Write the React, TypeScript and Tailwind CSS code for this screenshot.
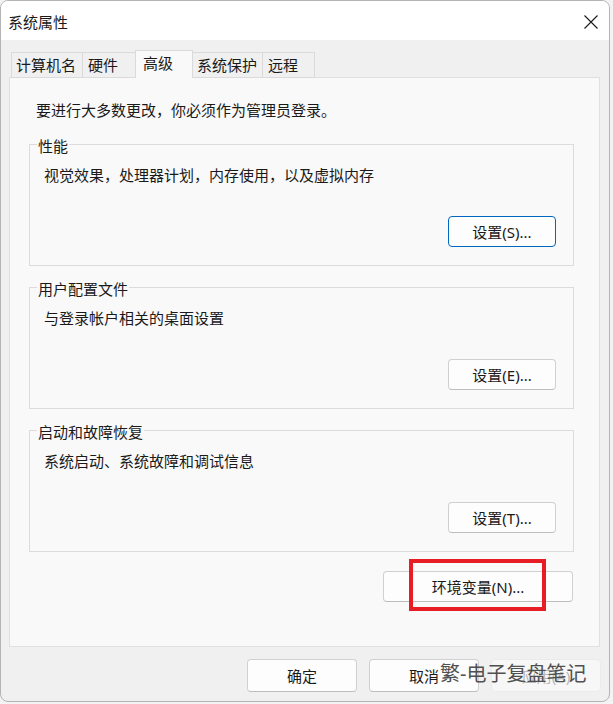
import React from "react";

const font = "font-['Noto_Sans','Noto_Sans_CJK_SC',sans-serif]";

function Btn({ label, primary }: { label: string; primary?: boolean }) {
  return (
    <div
      className={`ml-auto mr-[17px] mt-[31px] flex h-[31px] w-[108px] items-center justify-center rounded-[4px] border bg-[#fdfdfd] text-[15px] leading-[20px] text-[#1a1a1a] ${
        primary ? "border-[#0067c0]" : "border-[#d0d0d0] border-b-[#bdbdbd]"
      }`}
    >
      {label}
    </div>
  );
}

function Group({ title, desc, btn, primary, mt }: { title: string; desc: string; btn: string; primary?: boolean; mt: string }) {
  return (
    <div className={`ml-[19px] flex h-[122px] w-[545px] flex-col border border-[#dcdcdc] ${mt}`}>
      <div className="-mt-[9px] ml-[7px] w-fit bg-[#f9f9f9] px-[1px] text-[15px] leading-[20px] text-[#1a1a1a]">{title}</div>
      <div className="mt-[9px] pl-[14px] text-[15px] leading-[20px] text-[#1a1a1a]">{desc}</div>
      <Btn label={btn} primary={primary} />
    </div>
  );
}

export default function App() {
  return (
    <div className={`h-[704px] w-[613px] bg-[#f3f3f3] ${font}`}>
      <div className="flex h-[702px] w-[610px] flex-col overflow-hidden rounded-[8px] border border-[#b4b4b4] bg-[#f0f0f0]">
        {/* title bar */}
        <div className="flex h-[39px] items-center justify-between bg-white pt-[2px]">
          <div className="pl-[7px] text-[15px] leading-[20px] text-[#1a1a1a]">系统属性</div>
          <svg width="14" height="14" viewBox="0 0 14 14" className="mr-[11px]">
            <path d="M0.5 0.5 L13.5 13.5 M13.5 0.5 L0.5 13.5" stroke="#1a1a1a" strokeWidth="1.1" fill="none" />
          </svg>
        </div>

        {/* tabs */}
        <div className="relative z-10 -mb-px flex h-[38px] items-end pl-[10px] pt-[10px] text-[15px] leading-[20px] text-[#1a1a1a]">
          <div className="h-[26px] w-[72px] border border-[#dadada] bg-[#f0f0f0] pl-[4px] pt-[2px]">计算机名</div>
          <div className="-ml-px h-[26px] w-[55px] border border-[#dadada] bg-[#f0f0f0] pl-[5px] pt-[2px]">硬件</div>
          <div className="relative z-10 -ml-[2px] h-[28px] w-[58px] border border-b-0 border-[#dadada] bg-[#f9f9f9] pl-[7px] pt-[2px]">高级</div>
          <div className="-ml-[2px] h-[26px] w-[72px] border border-[#dadada] bg-[#f0f0f0] pl-[5px] pt-[2px]">系统保护</div>
          <div className="-ml-px h-[26px] w-[53px] border border-[#dadada] bg-[#f0f0f0] pl-[5px] pt-[2px]">远程</div>
        </div>

        {/* panel */}
        <div className="ml-[8px] flex h-[570px] w-[591px] flex-col border border-[#e0e0e0] bg-[#f9f9f9]">
          <div className="pl-[26px] pt-[22px] text-[15px] leading-[20px] text-[#1a1a1a]">要进行大多数更改，你必须作为管理员登录。</div>
          <Group mt="mt-[24px]" title="性能" desc="视觉效果，处理器计划，内存使用，以及虚拟内存" btn="设置(S)..." primary />
          <Group mt="mt-[21px]" title="用户配置文件" desc="与登录帐户相关的桌面设置" btn="设置(E)..." />
          <Group mt="mt-[21px]" title="启动和故障恢复" desc="系统启动、系统故障和调试信息" btn="设置(T)..." />
          <div className="relative ml-[373px] mt-[19px] w-[190px]">
            <div className="flex h-[31px] w-[190px] items-center justify-center rounded-[4px] border border-[#d0d0d0] border-b-[#bdbdbd] bg-[#fdfdfd] text-[15px] leading-[20px] text-[#1a1a1a]">
              环境变量(N)...
            </div>
            <div className="absolute left-[26px] top-[-12px] h-[52px] w-[137px] border-[4px] border-[#e81c24]" />
          </div>
        </div>

        {/* bottom buttons */}
        <div className="relative mt-[12px] flex justify-end gap-[12px] pr-[8px] text-[15px] leading-[20px]">
          <div className="flex h-[33px] w-[110px] items-center justify-center rounded-[4px] border border-[#d0d0d0] border-b-[#bdbdbd] bg-[#fdfdfd] text-[#1a1a1a]">确定</div>
          <div className="flex h-[33px] w-[110px] items-center justify-center rounded-[4px] border border-[#d0d0d0] border-b-[#bdbdbd] bg-[#fdfdfd] text-[#1a1a1a]">取消</div>
          <div className="flex h-[33px] w-[110px] items-center justify-center rounded-[4px] border border-[#ebebeb] bg-[#f7f7f7] text-[#b8b8b8]">应用(A)</div>
          <div className="absolute left-[439px] top-[0px] text-[20px] leading-[30px] text-[#505050]">繁-电子复盘笔记</div>
        </div>
      </div>
    </div>
  );
}
